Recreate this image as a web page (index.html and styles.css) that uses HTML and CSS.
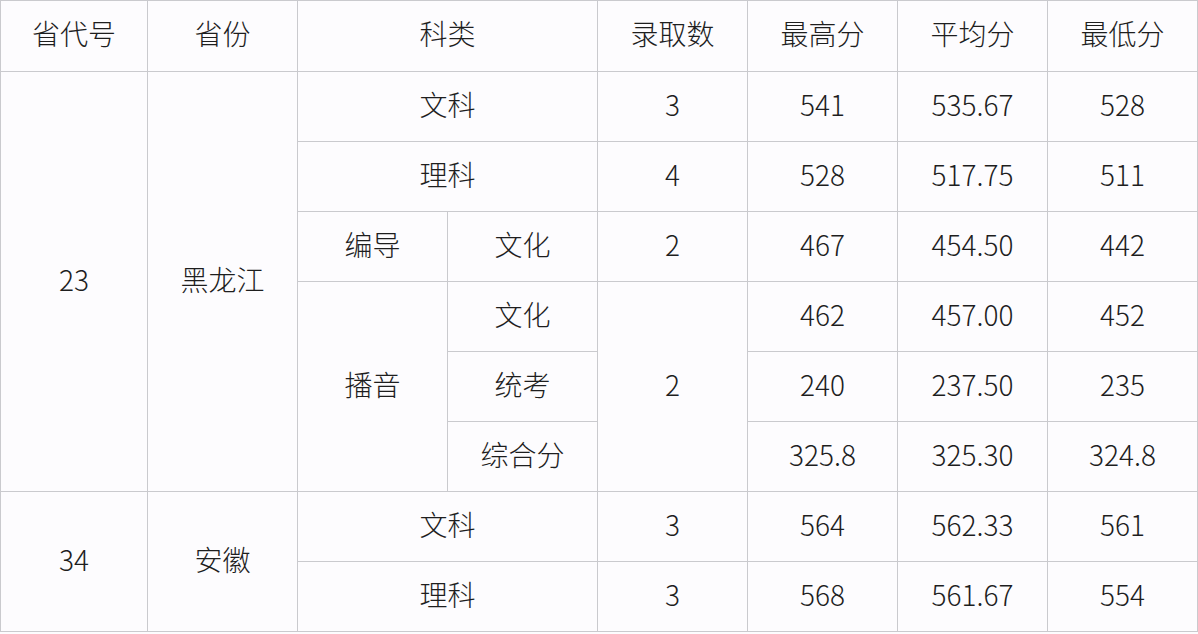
FILE: index.html
```html
<!DOCTYPE html>
<html lang="zh-CN">
<head>
<meta charset="utf-8">
<title>录取分数</title>
<link rel="stylesheet" href="styles.css">
</head>
<body>
<table class="score-table">
  <colgroup>
    <col class="c-first">
    <col class="c"><col class="c"><col class="c"><col class="c"><col class="c"><col class="c"><col class="c">
  </colgroup>
  <thead>
    <tr class="head-row">
      <th>省代号</th>
      <th>省份</th>
      <th colspan="2">科类</th>
      <th>录取数</th>
      <th>最高分</th>
      <th>平均分</th>
      <th>最低分</th>
    </tr>
  </thead>
  <tbody>
    <tr>
      <td rowspan="6">23</td>
      <td rowspan="6">黑龙江</td>
      <td colspan="2">文科</td>
      <td>3</td><td>541</td><td>535.67</td><td>528</td>
    </tr>
    <tr>
      <td colspan="2">理科</td>
      <td>4</td><td>528</td><td>517.75</td><td>511</td>
    </tr>
    <tr>
      <td>编导</td><td>文化</td>
      <td>2</td><td>467</td><td>454.50</td><td>442</td>
    </tr>
    <tr>
      <td rowspan="3">播音</td><td>文化</td>
      <td rowspan="3">2</td><td>462</td><td>457.00</td><td>452</td>
    </tr>
    <tr>
      <td>统考</td><td>240</td><td>237.50</td><td>235</td>
    </tr>
    <tr>
      <td>综合分</td><td>325.8</td><td>325.30</td><td>324.8</td>
    </tr>
    <tr>
      <td rowspan="2">34</td>
      <td rowspan="2">安徽</td>
      <td colspan="2">文科</td>
      <td>3</td><td>564</td><td>562.33</td><td>561</td>
    </tr>
    <tr>
      <td colspan="2">理科</td>
      <td>3</td><td>568</td><td>561.67</td><td>554</td>
    </tr>
  </tbody>
</table>
</body>
</html>
```

FILE: styles.css
```css
html, body {
  margin: 0;
  padding: 0;
  background: #fdfcfe;
}

.score-table {
  border-collapse: collapse;
  table-layout: fixed;
  width: 1198px;
  font-family: "Noto Sans CJK SC", "Noto Sans", sans-serif;
  font-weight: 300;
  font-size: 28px;
  color: #1e1e1e;
  background: #fdfcfe;
}

.c-first { width: 147px; }
.c { width: 150px; }

.score-table th,
.score-table td {
  border: 1px solid #cacace;
  text-align: center;
  vertical-align: middle;
  padding: 0 0 6px 0;
  font-weight: 300;
  line-height: 1;
}

.score-table tr { height: 70px; }
.score-table .head-row { height: 71px; }
```
